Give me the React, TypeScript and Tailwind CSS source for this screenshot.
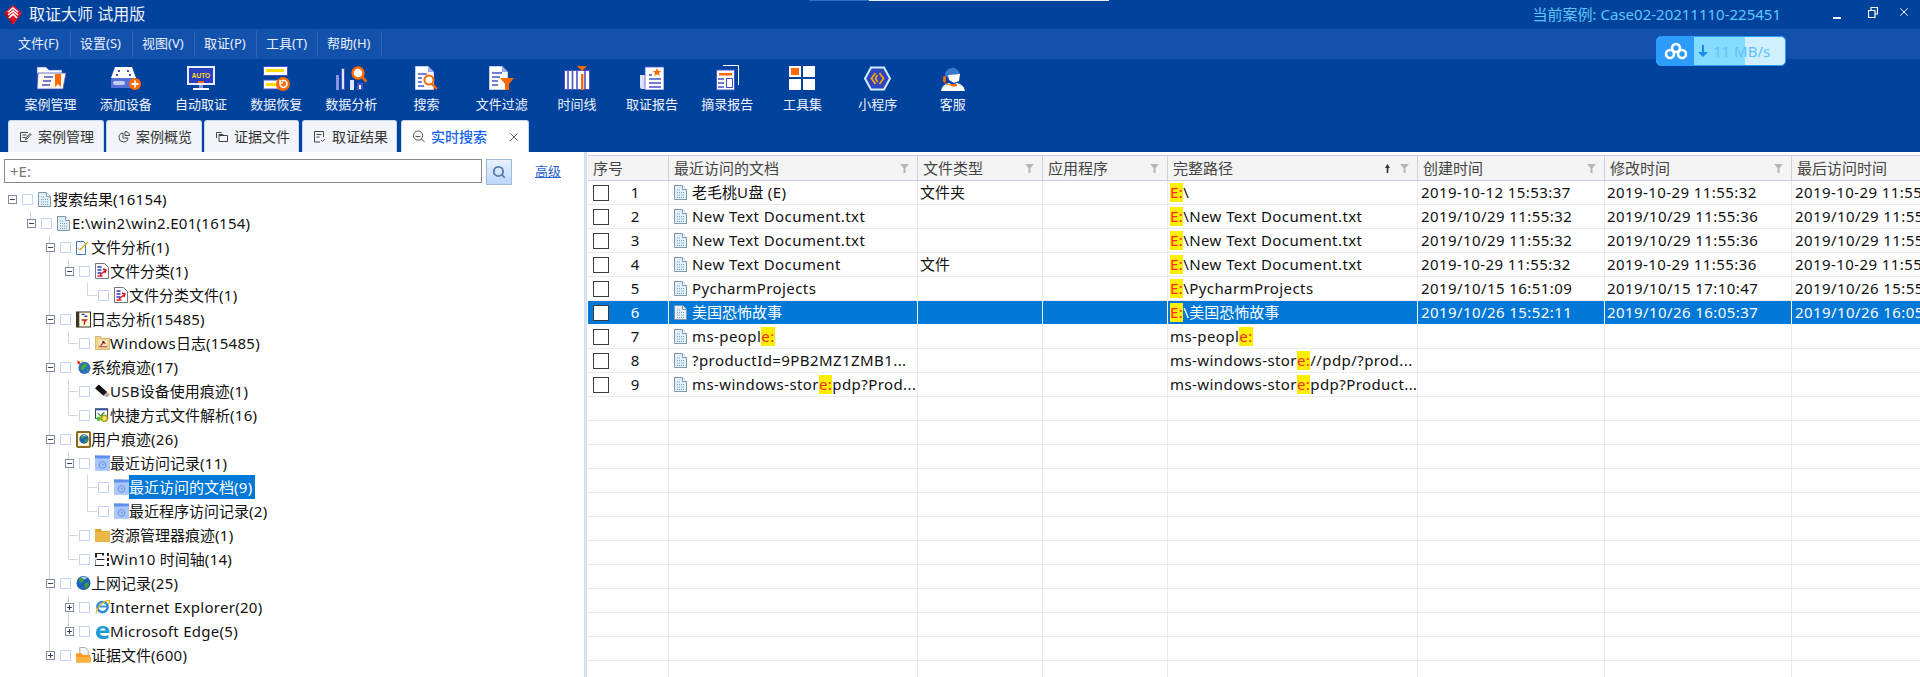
import React from 'react';
import { Search, X } from 'lucide-react';

const B = '#4454c8';
const O = '#ff6a00';

const Logo = () => (
  <svg width="18" height="20" viewBox="0 0 18 20">
    <path d="M9 0l9 8-9 12L0 8z" fill="#e0182a" />
    <path d="M9 20L0 8l3 0 6 9z" fill="#a80f1e" />
    <path d="M4 7l5-4 5 4M4 10l5-4 5 4M5 13l4-4 4 4" fill="none" stroke="#fff" strokeWidth="1.6" />
  </svg>
);

const toolIcons: Record<string, React.ReactNode> = {
  case: (
    <svg width="30" height="24" viewBox="0 0 30 24">
      <path d="M1 1h9l3 3h13v4H1z" fill="#fff" stroke={B} strokeWidth=".6" />
      <path d="M2 7h28l-3 16H1z" fill="#fff7ea" stroke={B} strokeWidth=".8" />
      <path d="M8 11h9M7 15h8M6 19h8" stroke={B} strokeWidth="1.6" />
      <path d="M19 8h6v13l-3-3-3 3z" fill={O} />
    </svg>
  ),
  add: (
    <svg width="31" height="24" viewBox="0 0 31 24">
      <path d="M5 1h17l4 11H1z" fill="#fff" />
      <path d="M8 4h2v2H8zM17 4h2v2h-2zM6 8h2v2H6zM19 8h2v2h-2z" fill={B} />
      <rect x="1" y="12" width="25" height="10" rx="1" fill="#5670d8" />
      <rect x="3" y="15" width="12" height="4" rx="2" fill="#c2d0f4" />
      <circle cx="25" cy="18" r="6" fill={O} />
      <path d="M25 14.5v7M21.5 18h7" stroke="#fff" strokeWidth="1.8" />
    </svg>
  ),
  auto: (
    <svg width="28" height="25" viewBox="0 0 28 25">
      <rect width="28" height="19" fill="#e8edff" />
      <rect x="2" y="2" width="24" height="15" fill="#2b3fc4" />
      <text x="14" y="11.5" textAnchor="middle" fontSize="6.5" fontWeight="700" fill="#ffe000" fontFamily="Liberation Sans">AUTO</text>
      <rect x="11" y="15" width="6" height="2" fill={O} />
      <rect x="12" y="19" width="4" height="3" fill="#8fa0e0" />
      <rect x="6" y="22" width="16" height="2" fill="#fff" />
    </svg>
  ),
  recover: (
    <svg width="27" height="25" viewBox="0 0 27 25">
      <rect x=".5" y=".5" width="24" height="9" fill="#fff" stroke={B} />
      <rect x="3" y="3" width="18" height="3" fill="#ffdc00" />
      <rect x=".5" y="14" width="21" height="9" fill="#fff" stroke={B} />
      <rect x="3" y="17" width="12" height="3" fill="#ffdc00" />
      <circle cx="20" cy="18" r="7" fill={O} />
      <path d="M17 18a3.5 3.5 0 1 0 1.5-3M17 14v3h3" fill="none" stroke="#fff" strokeWidth="1.6" />
    </svg>
  ),
  analysis: (
    <svg width="31" height="24" viewBox="0 0 31 24">
      <rect x="0" y="9" width="3" height="15" fill="#8794e0" />
      <rect x="5" y="2" width="4" height="22" fill={B} />
      <rect x="6" y="3" width="2" height="20" fill="#dfe4ff" />
      <rect x="14" y="14" width="4" height="10" fill="#dfe4ff" />
      <rect x="21" y="17" width="6" height="7" fill={B} />
      <rect x="23" y="19" width="2" height="4" fill="#fff" />
      <circle cx="22" cy="7" r="5.5" fill="#fff" stroke={O} strokeWidth="2.4" />
      <path d="M26 11l4.5 4.5" stroke={O} strokeWidth="2.6" />
    </svg>
  ),
  search: (
    <svg width="24" height="24" viewBox="0 0 24 24">
      <path d="M0 0h13l6 6v18H0z" fill="#fff" stroke={B} strokeWidth=".6" />
      <path d="M13 0v6h6z" fill="#9aa8ec" />
      <path d="M3 8h9M3 12h4M3 16h4M3 20h6" stroke={B} strokeWidth="1.6" />
      <circle cx="14" cy="14" r="4.5" fill="#fff" stroke={O} strokeWidth="2" />
      <path d="M17 18l5 5" stroke={O} strokeWidth="2.4" />
    </svg>
  ),
  filter: (
    <svg width="25" height="24" viewBox="0 0 25 24">
      <path d="M0 0h13l6 6v18H0z" fill="#fff" stroke={B} strokeWidth=".6" />
      <path d="M13 0v6h6z" fill="#9aa8ec" />
      <path d="M3 7h10M3 11h8M3 15h6M3 19h6" stroke={B} strokeWidth="1.6" />
      <path d="M11 12h14l-5 6v6h-4v-6z" fill={O} />
    </svg>
  ),
  timeline: (
    <svg width="26" height="24" viewBox="0 0 26 24">
      <rect x=".5" y="4.5" width="25" height="19" fill="#fff" stroke={B} />
      <path d="M4 4v20M8.500 4v20M13 4v20M21 4v20" stroke={B} strokeWidth="1.6" />
      <rect x="17" y="8" width="2.400" height="16" fill={O} />
      <path d="M13 0h10l-5 5z" fill={O} />
    </svg>
  ),
  report: (
    <svg width="24" height="24" viewBox="0 0 24 24">
      <path d="M0 9h6v14H2a2 2 0 0 1-2-2z" fill="#dde3ff" />
      <rect x="5" y="1" width="19" height="23" fill="#fff" stroke={B} strokeWidth=".8" />
      <path d="M9 9h3M9 13h12M9 17h12M9 21h12" stroke={B} strokeWidth="1.700" />
      <path d="M17 2l1.300 3h3l-2.400 2 1 3-2.900-1.800-2.900 1.800 1-3-2.400-2h3z" fill={O} />
    </svg>
  ),
  extract: (
    <svg width="23" height="26" viewBox="0 0 23 26">
      <path d="M7 .5h15.500V20" fill="none" stroke="#fff" strokeWidth="1" />
      <rect x=".5" y="5" width="18" height="20" fill="#fff" stroke={B} />
      <rect x="3" y="8" width="13" height="2.500" fill={O} />
      <path d="M2 14h6M2 18h6M2 22h6" stroke={B} strokeWidth="1.600" />
      <rect x="10.500" y="13.500" width="6" height="9" fill="#fff" stroke={B} />
    </svg>
  ),
  tools: (
    <svg width="26" height="24" viewBox="0 0 26 24">
      <rect width="12" height="11" fill="#fff" />
      <rect x="2" y="2" width="8" height="7" fill={O} />
      <rect x="14" width="12" height="11" fill="#fff" />
      <rect y="13" width="12" height="11" fill="#fff" />
      <rect x="14" y="13" width="12" height="11" fill="#fff" />
    </svg>
  ),
  mini: (
    <svg width="27" height="25" viewBox="0 0 27 25">
      <path d="M7 1.500h13l6 11-6 11H7l-6-11z" fill="#2f45c0" stroke="#d2f0ff" strokeWidth="2" />
      <path d="M11.500 7l-4 5.500 4 5.500M15.500 7l4 5.500-4 5.500M13.500 9l-2 3.500 2 3.500" fill="none" stroke="#ffa800" strokeWidth="1.700" />
    </svg>
  ),
  service: (
    <svg width="25" height="25" viewBox="0 0 25 25">
      <path d="M5 11a7.500 7.500 0 0 1 15-3l-7 1-3 3z" fill="#3a78cc" />
      <path d="M8 9l12-1-1 7-5 2-5-3z" fill="#fff" />
      <path d="M1 25c1-5 4-7 8-8l4 2 4-2c4 1 7 3 8 8z" fill="#fff" />
      <rect x="3" y="10" width="3" height="6" rx="1.500" fill={O} />
      <path d="M4 16c1 2 4 3 8 3" fill="none" stroke={O} strokeWidth="1" />
      <rect x="11" y="18" width="6" height="2.500" rx="1" fill={O} />
    </svg>
  ),
};

const tools: [string, string][] = [
  ['case', '案例管理'], ['add', '添加设备'], ['auto', '自动取证'], ['recover', '数据恢复'], ['analysis', '数据分析'],
  ['search', '搜索'], ['filter', '文件过滤'], ['timeline', '时间线'], ['report', '取证报告'], ['extract', '摘录报告'],
  ['tools', '工具集'], ['mini', '小程序'], ['service', '客服'],
];

const menuItems: [string, string][] = [
  ['文件(F)', 'w-[53px]'], ['设置(S)', 'w-[62px]'], ['视图(V)', 'w-[62px]'],
  ['取证(P)', 'w-[62px]'], ['工具(T)', 'w-[61px]'], ['帮助(H)', 'w-[64px]'],
];

const tabS = { fill: 'none', stroke: '#444', strokeWidth: 1 };
const tabs: { label: string; cls: string; icon: React.ReactNode; active?: boolean }[] = [
  { label: '案例管理', cls: 'w-[96px] mr-[2px]', icon: <svg width="12" height="12" viewBox="0 0 12 12" {...tabS}><path d="M8 1.500H.5v9h7M2.500 4h4M2.500 6.500h3M7 8l4-4.500-1-1-4 4.500-.5 1.500z" /></svg> },
  { label: '案例概览', cls: 'w-[96px] mr-[2px]', icon: <svg width="12" height="12" viewBox="0 0 12 12" {...tabS}><path d="M5 2a4.500 4.500 0 1 0 5 5H5zM7 .5v4h4.500A4.500 4.500 0 0 0 7 .5z" /></svg> },
  { label: '证据文件', cls: 'w-[95px] mr-[3px]', icon: <svg width="12" height="12" viewBox="0 0 12 12" {...tabS}><path d="M.5 7V1.500h5M3 4.500h8.500v6H3zM3 4.500v-1h4v1" /></svg> },
  { label: '取证结果', cls: 'w-[95px] mr-[4px]', icon: <svg width="12" height="12" viewBox="0 0 12 12" {...tabS}><path d="M6 11H.5V.5h9V6M2.500 3.500h5M2.500 6h3M7 9l1.500 1.500L11 8" /></svg> },
  { label: '实时搜索', cls: 'w-[128px]', active: true, icon: <svg width="13" height="13" viewBox="0 0 13 13" {...tabS}><circle cx="5.500" cy="5.500" r="5" /><path d="M9 9l3.500 3.500M3 6.500h5" /></svg> },
];

const TDoc = () => (
  <svg width="13" height="15" viewBox="0 0 13 15">
    <path d="M.5.500h8l4 4v10H.5z" fill="#e3eef7" stroke="#7f97ad" />
    <path d="M8.500.500v4h4" fill="#fff" stroke="#7f97ad" />
    <path d="M3 5h4M3 7.500h7M3 10h7M3 12.500h7" stroke="#6fa3c4" strokeDasharray="1 1" />
  </svg>
);

const FolderClock = () => (
  <svg width="16" height="16" viewBox="0 0 16 16">
    <path d="M0 0h8l1 3h7v13H0z" fill="#8fb4f8" />
    <rect y="3" width="16" height="13" fill="#a9c6fb" />
    <path d="M0 0h16v3H0z" fill="#5a90f0" />
    <circle cx="8" cy="10" r="3.500" fill="none" stroke="#5f8fd8" />
    <path d="M8 8.500V10h1.500" fill="none" stroke="#5f8fd8" />
  </svg>
);

const Globe = ({ s = 16 }: { s?: number }) => (
  <svg width={s} height={s} viewBox="0 0 16 16">
    <circle cx="8" cy="8" r="7.500" fill="#1d62b8" />
    <path d="M3 4c2-2 5-2 6 0l-2 3-3 1zM9 9l4-2 1 3-3 4-2-2z" fill="#3f9a3c" />
    <path d="M5 2c2-1 5-1 7 1l-3 1z" fill="#a6d4f5" />
  </svg>
);

const treeIcons: Record<string, React.ReactNode> = {
  doc: <TDoc />,
  pen: (
    <svg width="14" height="15" viewBox="0 0 14 15">
      <path d="M.5 1.500h7l2 2v11H.5z" fill="#fff" stroke="#3a78c8" />
      <path d="M4 10l8-8" stroke="#d8b020" strokeWidth="1.500" />
      <path d="M2 8l1 2 2-2" fill="none" stroke="#d8b020" />
    </svg>
  ),
  cls: (
    <svg width="14" height="16" viewBox="0 0 14 16">
      <path d="M.5.500h9l4 4v11H.5z" fill="#fff" stroke="#777" />
      <path d="M2.500 4h4M2.500 7h4M2.500 10h4" stroke="#2830d0" strokeWidth="1.300" />
      <path d="M5 12l6-5M8 6l3 1-1 3M2.500 13h5" fill="none" stroke="#e01818" strokeWidth="1.400" />
    </svg>
  ),
  log: (
    <svg width="16" height="17" viewBox="0 0 16 17">
      <rect x=".5" y=".5" width="15" height="16" fill="#ffffe0" stroke="#222" />
      <rect x=".5" y=".5" width="3" height="16" fill="#40382a" />
      <path d="M6 3h3M9 5h3" stroke="#2030c0" strokeWidth="1.500" />
      <path d="M6 9h5l-2 2v3" fill="none" stroke="#c02020" strokeWidth="1.500" />
    </svg>
  ),
  winlog: (
    <svg width="16" height="14" viewBox="0 0 16 14">
      <path d="M0 0h6l1 2h9v12H0z" fill="#ecd48c" stroke="#b08c40" strokeWidth=".6" />
      <rect x="4" y="4" width="9" height="8" fill="#f6e8c0" />
      <path d="M6 10l3-4 2 2M4 11h9" fill="none" stroke="#c03020" strokeWidth="1.300" />
      <circle cx="9" cy="6" r="1.200" fill="#222" />
    </svg>
  ),
  sys: (
    <svg width="16" height="16" viewBox="0 0 16 16">
      <circle cx="9" cy="9" r="6.500" fill="#2a70c0" />
      <path d="M6 6l4-2 2 3-3 2-1 3-3-2zM12 10l2 0-2 3z" fill="#4aa83c" />
      <path d="M1 1l3 1 1 3-3 0z" fill="#e03020" />
      <path d="M5 0l3 2-2 1z" fill="#f0c020" />
    </svg>
  ),
  usb: (
    <svg width="16" height="15" viewBox="0 0 16 15">
      <path d="M0 4l4-4 9 8-4 4z" fill="#111" />
      <path d="M9 12l4-4 3 3-3 3z" fill="#b0b0b0" />
    </svg>
  ),
  lnk: (
    <svg width="16" height="15" viewBox="0 0 16 15">
      <rect x=".5" y=".5" width="13" height="10" fill="#fff" stroke="#333" />
      <path d="M0 0h14v2H0z" fill="#3050a0" />
      <path d="M3 5l3 3 4-4" fill="none" stroke="#2a9040" strokeWidth="1.300" />
      <circle cx="10" cy="10.500" r="3.500" fill="#e8d020" stroke="#8a7a10" />
      <circle cx="4" cy="11" r="2.500" fill="#60c040" />
      <circle cx="10" cy="10.500" r="1.200" fill="#fff" />
    </svg>
  ),
  user: (
    <div className="relative flex h-[17px] w-[16px] items-center justify-center rounded-[2px] border-2 border-[#8a6a20] bg-[#fff6cc]">
      <Globe s={10} />
    </div>
  ),
  clock: <FolderClock />,
  folder: (
    <svg width="15" height="13" viewBox="0 0 15 13">
      <path d="M0 0h6l1 2h8v11H0z" fill="#e0a830" />
      <rect y="3" width="15" height="10" fill="#eab848" />
    </svg>
  ),
  time: (
    <svg width="15" height="13" viewBox="0 0 15 13">
      <path d="M0 .500h9M0 12.500h9M1.500 6.500h8M0 6.500v6" fill="none" stroke="#222" />
      <path d="M1 .500v4M8 .500v2M13 0v3M13 5v3M13 10v3" stroke="#222" strokeWidth="2" />
    </svg>
  ),
  net: <Globe s={16} />,
  ie: (
    <svg width="16" height="16" viewBox="0 0 16 16">
      <circle cx="8" cy="8" r="5.500" fill="none" stroke="#2b8fd8" strokeWidth="2.600" />
      <path d="M4 7.500h9" stroke="#2b8fd8" strokeWidth="2" />
      <path d="M1 15C2 8 8 2 14 1c2 0 2 2 0 4" fill="none" stroke="#f0b020" strokeWidth="1.300" />
    </svg>
  ),
  edge: (
    <svg width="15" height="15" viewBox="0 0 15 15">
      <path d="M1 8a7 7 0 0 1 13.500-1.500V9H5c0 3 4.500 4 8.500 2v3c-6 2.500-13 .5-12.500-6zM5 6.500h5.500C10 3.500 6 3.500 5 6.500z" fill="#1f9bd4" />
    </svg>
  ),
  evid: (
    <svg width="16" height="16" viewBox="0 0 16 16">
      <path d="M4 0h6l3 3v6H4z" fill="#f4f4f4" stroke="#aaa" />
      <path d="M0 6h6l1 2h8v8H0z" fill="#f89820" />
      <path d="M0 10h16v6H0z" fill="#fcb040" />
    </svg>
  ),
};

// Latin runs are spaced out a little to reach the widths of the reference's UI font; CJK runs stay as they are.
const Runs = ({ t, cls }: { t: string; cls: string }) => (
  <>
    {t.split(/([\u4e00-\u9fff\uff00-\uffef]+)/).map((p, i) =>
      i % 2 ? <span key={i}>{p}</span> : <span key={i} className={cls}>{p}</span>,
    )}
  </>
);
const TREE_TRACK = 'tracking-[0.28px]';
const TABLE_TRACK = 'tracking-[0.42px]';

type TreeRow = { l: number; e?: '-' | '+'; i: string; t: string; sel?: boolean };
const tree: TreeRow[] = [
  { l: 0, e: '-', i: 'doc', t: '搜索结果(16154)' },
  { l: 1, e: '-', i: 'doc', t: 'E:\\win2\\win2.E01(16154)' },
  { l: 2, e: '-', i: 'pen', t: '文件分析(1)' },
  { l: 3, e: '-', i: 'cls', t: '文件分类(1)' },
  { l: 4, i: 'cls', t: '文件分类文件(1)' },
  { l: 2, e: '-', i: 'log', t: '日志分析(15485)' },
  { l: 3, i: 'winlog', t: 'Windows日志(15485)' },
  { l: 2, e: '-', i: 'sys', t: '系统痕迹(17)' },
  { l: 3, i: 'usb', t: 'USB设备使用痕迹(1)' },
  { l: 3, i: 'lnk', t: '快捷方式文件解析(16)' },
  { l: 2, e: '-', i: 'user', t: '用户痕迹(26)' },
  { l: 3, e: '-', i: 'clock', t: '最近访问记录(11)' },
  { l: 4, i: 'clock', t: '最近访问的文档(9)', sel: true },
  { l: 4, i: 'clock', t: '最近程序访问记录(2)' },
  { l: 3, i: 'folder', t: '资源管理器痕迹(1)' },
  { l: 3, i: 'time', t: 'Win10 时间轴(14)' },
  { l: 2, e: '-', i: 'net', t: '上网记录(25)' },
  { l: 3, e: '+', i: 'ie', t: 'Internet Explorer(20)' },
  { l: 3, e: '+', i: 'edge', t: 'Microsoft Edge(5)' },
  { l: 2, e: '+', i: 'evid', t: '证据文件(600)' },
];

const hasLater = (idx: number, lvl: number) => {
  for (let j = idx + 1; j < tree.length; j++) {
    if (tree[j].l < lvl) return false;
    if (tree[j].l === lvl) return true;
  }
  return false;
};

const Guides = ({ idx, row }: { idx: number; row: TreeRow }) => {
  const out: React.ReactNode[] = [];
  for (let l = 1; l <= row.l; l++) {
    const x = 12 + 19 * l;
    const later = hasLater(idx, l);
    if (l < row.l) {
      if (later) out.push(<span key={l} className="absolute top-0 h-[24px] w-px bg-[#d6d6d6]" style={{ left: x - 1 }} />);
    } else {
      out.push(<span key={l} className="absolute top-0 w-px bg-[#d6d6d6]" style={{ left: x - 1, height: later ? 24 : 12 }} />);
      if (!row.e) out.push(<span key="h" className="absolute top-[12px] h-px w-[10px] bg-[#d6d6d6]" style={{ left: x - 1 }} />);
    }
  }
  return <>{out}</>;
};

const Row = ({ idx, row }: { idx: number; row: TreeRow }) => (
  <div className="relative flex h-[24px] items-center text-[15px] leading-[24px] text-[#111]" style={{ paddingLeft: 8 + 19 * row.l }}>
    <Guides idx={idx} row={row} />
    <span className="relative flex h-[9px] w-[9px] shrink-0 items-center justify-center">
      {row.e && (
        <span className="flex h-[9px] w-[9px] items-center justify-center border border-[#8289a0] bg-white">
          <span className="absolute h-px w-[5px] bg-[#3a4060]" />
          {row.e === '+' && <span className="absolute h-[5px] w-px bg-[#3a4060]" />}
        </span>
      )}
    </span>
    <span className="relative ml-[5px] h-[11px] w-[11px] shrink-0 border border-[#c4d4f8] bg-white" />
    <span className="ml-[5px] flex w-[15px] shrink-0 items-center">{treeIcons[row.i]}</span>
    <span className={`whitespace-nowrap ${row.sel ? 'bg-[#0078d7] pr-[3px] text-white' : ''}`}><Runs t={row.t} cls={TREE_TRACK} /></span>
  </div>
);

const FilterIcon = () => (
  <svg width="9" height="9" viewBox="0 0 9 9" className="shrink-0"><path d="M0 0h9L5.500 4v5h-2V4z" fill="#b6b6b6" /></svg>
);

const cols = ['w-[81px]', 'w-[249px]', 'w-[125px]', 'w-[125px]', 'w-[250px]', 'w-[187px]', 'w-[187px]', 'w-[130px]'];
const headers: { t: string; filter: boolean; sort?: boolean }[] = [
  { t: '序号', filter: false }, { t: '最近访问的文档', filter: true }, { t: '文件类型', filter: true }, { t: '应用程序', filter: true },
  { t: '完整路径', filter: true, sort: true }, { t: '创建时间', filter: true }, { t: '修改时间', filter: true }, { t: '最后访问时间', filter: false },
];

type DataRow = [string, string, string, string, string, string];
const data: DataRow[] = [
  ['老毛桃U盘 (E)', '文件夹', '|E:|\\', '2019-10-12 15:53:37', '2019-10-29 11:55:32', '2019-10-29 11:55:32'],
  ['New Text Document.txt', '', '|E:|\\New Text Document.txt', '2019/10/29 11:55:32', '2019/10/29 11:55:36', '2019/10/29 11:55:36'],
  ['New Text Document.txt', '', '|E:|\\New Text Document.txt', '2019/10/29 11:55:32', '2019/10/29 11:55:36', '2019/10/29 11:55:36'],
  ['New Text Document', '文件', '|E:|\\New Text Document.txt', '2019-10-29 11:55:32', '2019-10-29 11:55:36', '2019-10-29 11:55:36'],
  ['PycharmProjects', '', '|E:|\\PycharmProjects', '2019/10/15 16:51:09', '2019/10/15 17:10:47', '2019/10/26 15:55:32'],
  ['美国恐怖故事', '', '|E:|\\美国恐怖故事', '2019/10/26 15:52:11', '2019/10/26 16:05:37', '2019/10/26 16:05:37'],
  ['ms-peopl|e:|', '', 'ms-peopl|e:|', '', '', ''],
  ['?productId=9PB2MZ1ZMB1...', '', 'ms-windows-stor|e:|//pdp/?prod...', '', '', ''],
  ['ms-windows-stor|e:|pdp?Prod...', '', 'ms-windows-stor|e:|pdp?Product...', '', '', ''],
];

const Hl = ({ text }: { text: string }) => (
  <span className="whitespace-nowrap">
    {text.split('|').map((p, i) =>
      i % 2 ? (
        <span key={i} className={`inline-block h-[19px] bg-[#ffee00] leading-[19px] text-[#ff2a2a] ${TABLE_TRACK}`}>{p}</span>
      ) : (
        <span key={i}><Runs t={p} cls={TABLE_TRACK} /></span>
      ),
    )}
  </span>
);

const Cell = ({ w, sel, children, cls = '' }: { w: string; sel?: boolean; children?: React.ReactNode; cls?: string }) => (
  <div className={`${w} ${cls} flex h-full shrink-0 items-center overflow-hidden border-r ${sel ? 'border-white' : 'border-[#ebebef]'}`}>{children}</div>
);

const DataRowView = ({ i, d }: { i: number; d?: DataRow }) => {
  const sel = i === 5;
  return (
    <div className={`flex h-[24px] shrink-0 border-b ${sel ? 'border-white bg-[#0078d7] text-white' : 'border-[#ebebef] text-[#111]'}`}>
      <Cell w={cols[0]} sel={sel}>
        {d && (
          <>
            <span className="ml-[5px] h-[16px] w-[16px] shrink-0 border border-[#3c3c3c] bg-white" />
            <span className="ml-[19px] w-[14px] text-center">{i + 1}</span>
          </>
        )}
      </Cell>
      <Cell w={cols[1]} sel={sel} cls="pl-[5px]">
        {d && (
          <>
            <span className="mr-[4px] flex w-[14px] shrink-0"><TDoc /></span>
            <Hl text={d[0]} />
          </>
        )}
      </Cell>
      <Cell w={cols[2]} sel={sel} cls="pl-[2px]">{d && d[1]}</Cell>
      <Cell w={cols[3]} sel={sel} />
      <Cell w={cols[4]} sel={sel} cls="pl-[2px]">{d && <Hl text={d[2]} />}</Cell>
      <Cell w={cols[5]} sel={sel} cls={`pl-[3px] ${TABLE_TRACK}`}>{d && d[3]}</Cell>
      <Cell w={cols[6]} sel={sel} cls={`pl-[2px] ${TABLE_TRACK}`}>{d && d[4]}</Cell>
      <Cell w={cols[7]} sel={sel} cls={`pl-[3px] ${TABLE_TRACK}`}><span className="whitespace-nowrap">{d && d[5]}</span></Cell>
    </div>
  );
};

export default function App() {
  return (
    <div className="relative h-[677px] w-[1920px] overflow-hidden bg-white font-['Noto_Sans','Noto_Sans_CJK_SC',sans-serif]">
      {/* top strip */}
      <div className="absolute left-[809px] top-0 z-10 flex h-px">
        <div className="w-[60px] bg-[#2a70c8]" />
        <div className="w-[240px] bg-[#e8ecf2]" />
      </div>

      {/* title bar */}
      <div className="flex h-[29px] items-center bg-[#00429c] pl-[4px] text-white">
        <Logo />
        <span className="ml-[7px] text-[16px] leading-[29px] text-[#eef3ff]">取证大师 试用版</span>
        <div className="flex-1" />
        <span className="mr-[52px] whitespace-nowrap text-[15px] text-[#5fc6ff]">
          当前案例:<span className="ml-[4px]">Case02-20211110-225451</span>
        </span>
        <div className="flex items-center">
          <span className="mt-[7px] h-[2px] w-[8px] bg-white" />
          <svg width="10" height="11" viewBox="0 0 10 11" className="ml-[27px] mb-[5px]" fill="none" stroke="#fff">
            <path d="M3 3V.5h6.500V7H7M.5 3.500h6.500V10.500H.5z" strokeWidth="1.200" />
          </svg>
          <X size={14} strokeWidth={1.6} className="ml-[19px] mr-[9px] mb-[5px]" />
        </div>
      </div>

      {/* menu */}
      <div className="flex h-[30px] items-center bg-[#1252ac] pl-[18px] text-[13px] text-[#eaf0ff]">
        {menuItems.map(([t, w], i) => (
          <div key={t} className={`${w} ${i === 0 ? '' : 'pl-[9px]'} flex h-[26px] items-center border-r border-[#2a66ba]`}>{t}</div>
        ))}
      </div>

      {/* toolbar + tabs */}
      <div className="h-[93px] bg-[#00429c]">
        <div className="flex h-[61px] pl-[13px]">
          {tools.map(([k, t]) => (
            <div key={k} className="flex w-[75.2px] shrink-0 flex-col items-center pt-[6px]">
              <div className="flex h-[26px] items-center justify-center">{toolIcons[k]}</div>
              <span className="mt-[3px] text-[13px] leading-[20px] text-[#f0f4ff]">{t}</span>
            </div>
          ))}
        </div>
        <div className="flex h-[32px] pl-[8px]">
          {tabs.map((t) => (
            <div
              key={t.label}
              className={`${t.cls} flex h-[32px] items-center rounded-t-[3px] border-x border-t border-[#c6d8f0] pl-[11px] text-[14px] ${t.active ? 'bg-white font-medium text-[#1262f0]' : 'bg-[#f1f4f9] text-[#333]'}`}
            >
              <span className="mr-[6px] flex w-[12px] justify-center">{t.icon}</span>
              {t.label}
              {t.active && <X size={14} strokeWidth={1.5} className="ml-[20px] text-[#555]" />}
            </div>
          ))}
        </div>
      </div>

      {/* body */}
      <div className="flex h-[525px]">
        <div className="w-[584px] shrink-0">
          <div className="flex h-[35px] items-start pl-[4px] pt-[7px]">
            <div className="flex h-[24px] w-[478px] items-center border border-[#8a8a8a] pl-[5px] text-[15px] text-[#777]">+E:</div>
            <div className="ml-[4px] flex h-[26px] w-[26px] items-center justify-center border border-[#a0bad8] bg-gradient-to-b from-[#e8f1ff] to-[#bdd6fa]">
              <Search size={14} strokeWidth={3} className="text-[#4f78a8]" />
            </div>
            <span className="ml-[23px] mt-[3px] text-[13px] leading-[18px] text-[#2a62d0] underline">高级</span>
          </div>
          {tree.map((r, i) => <Row key={i} idx={i} row={r} />)}
        </div>

        <div className="h-full w-[3px] shrink-0 bg-[#d4dff0]" />

        <div className="flex min-w-0 flex-1 flex-col pl-[1px] pt-[3px] text-[15px]">
          <div className="flex h-[26px] shrink-0 border-y border-[#cfcfe2] bg-[#f4f4f5] text-[#444]">
            {headers.map((h, i) => (
              <div key={h.t} className={`${cols[i]} flex h-full shrink-0 items-center overflow-hidden border-r border-[#cfcfe2] pl-[5px] pr-[8px]`}>
                <span className="flex-1 whitespace-nowrap">{h.t}</span>
                {h.sort && (
                  <svg width="7" height="9" viewBox="0 0 7 9" className="mr-[9px]"><path d="M3.500 0L6 4H4.300v5H2.700V4H1z" fill="#333" /></svg>
                )}
                {h.filter && <FilterIcon />}
              </div>
            ))}
          </div>
          {Array.from({ length: 21 }).map((_, i) => <DataRowView key={i} i={i} d={data[i]} />)}
        </div>
      </div>

      {/* floating download widget */}
      <div className="absolute left-[1656px] top-[36px] flex h-[30px] w-[130px] overflow-hidden rounded-[5px] border border-[#2d9cff] bg-[#d0f0ff]">
        <div className="flex w-[37px] shrink-0 items-center justify-center bg-[#2d9cff]">
          <svg width="24" height="18" viewBox="0 0 24 18" fill="none" stroke="#fff" strokeWidth="2.600">
            <circle cx="12" cy="6" r="4" />
            <circle cx="6" cy="12" r="4" />
            <circle cx="18" cy="12" r="4" />
          </svg>
        </div>
        <div className="relative flex flex-1 items-center">
          <div className="absolute inset-y-0 left-0 w-[51px] bg-[#86dcff]" />
          <span className="relative ml-[4px] flex items-center text-[15px] text-[#62c0ff]">
            <svg width="10" height="12" viewBox="0 0 10 12" className="mr-[5px]"><path d="M4 0h2v7h4L5 12 0 7h4z" fill="#1a8ae8" /></svg>
            11 MB/s
          </span>
        </div>
      </div>
    </div>
  );
}
